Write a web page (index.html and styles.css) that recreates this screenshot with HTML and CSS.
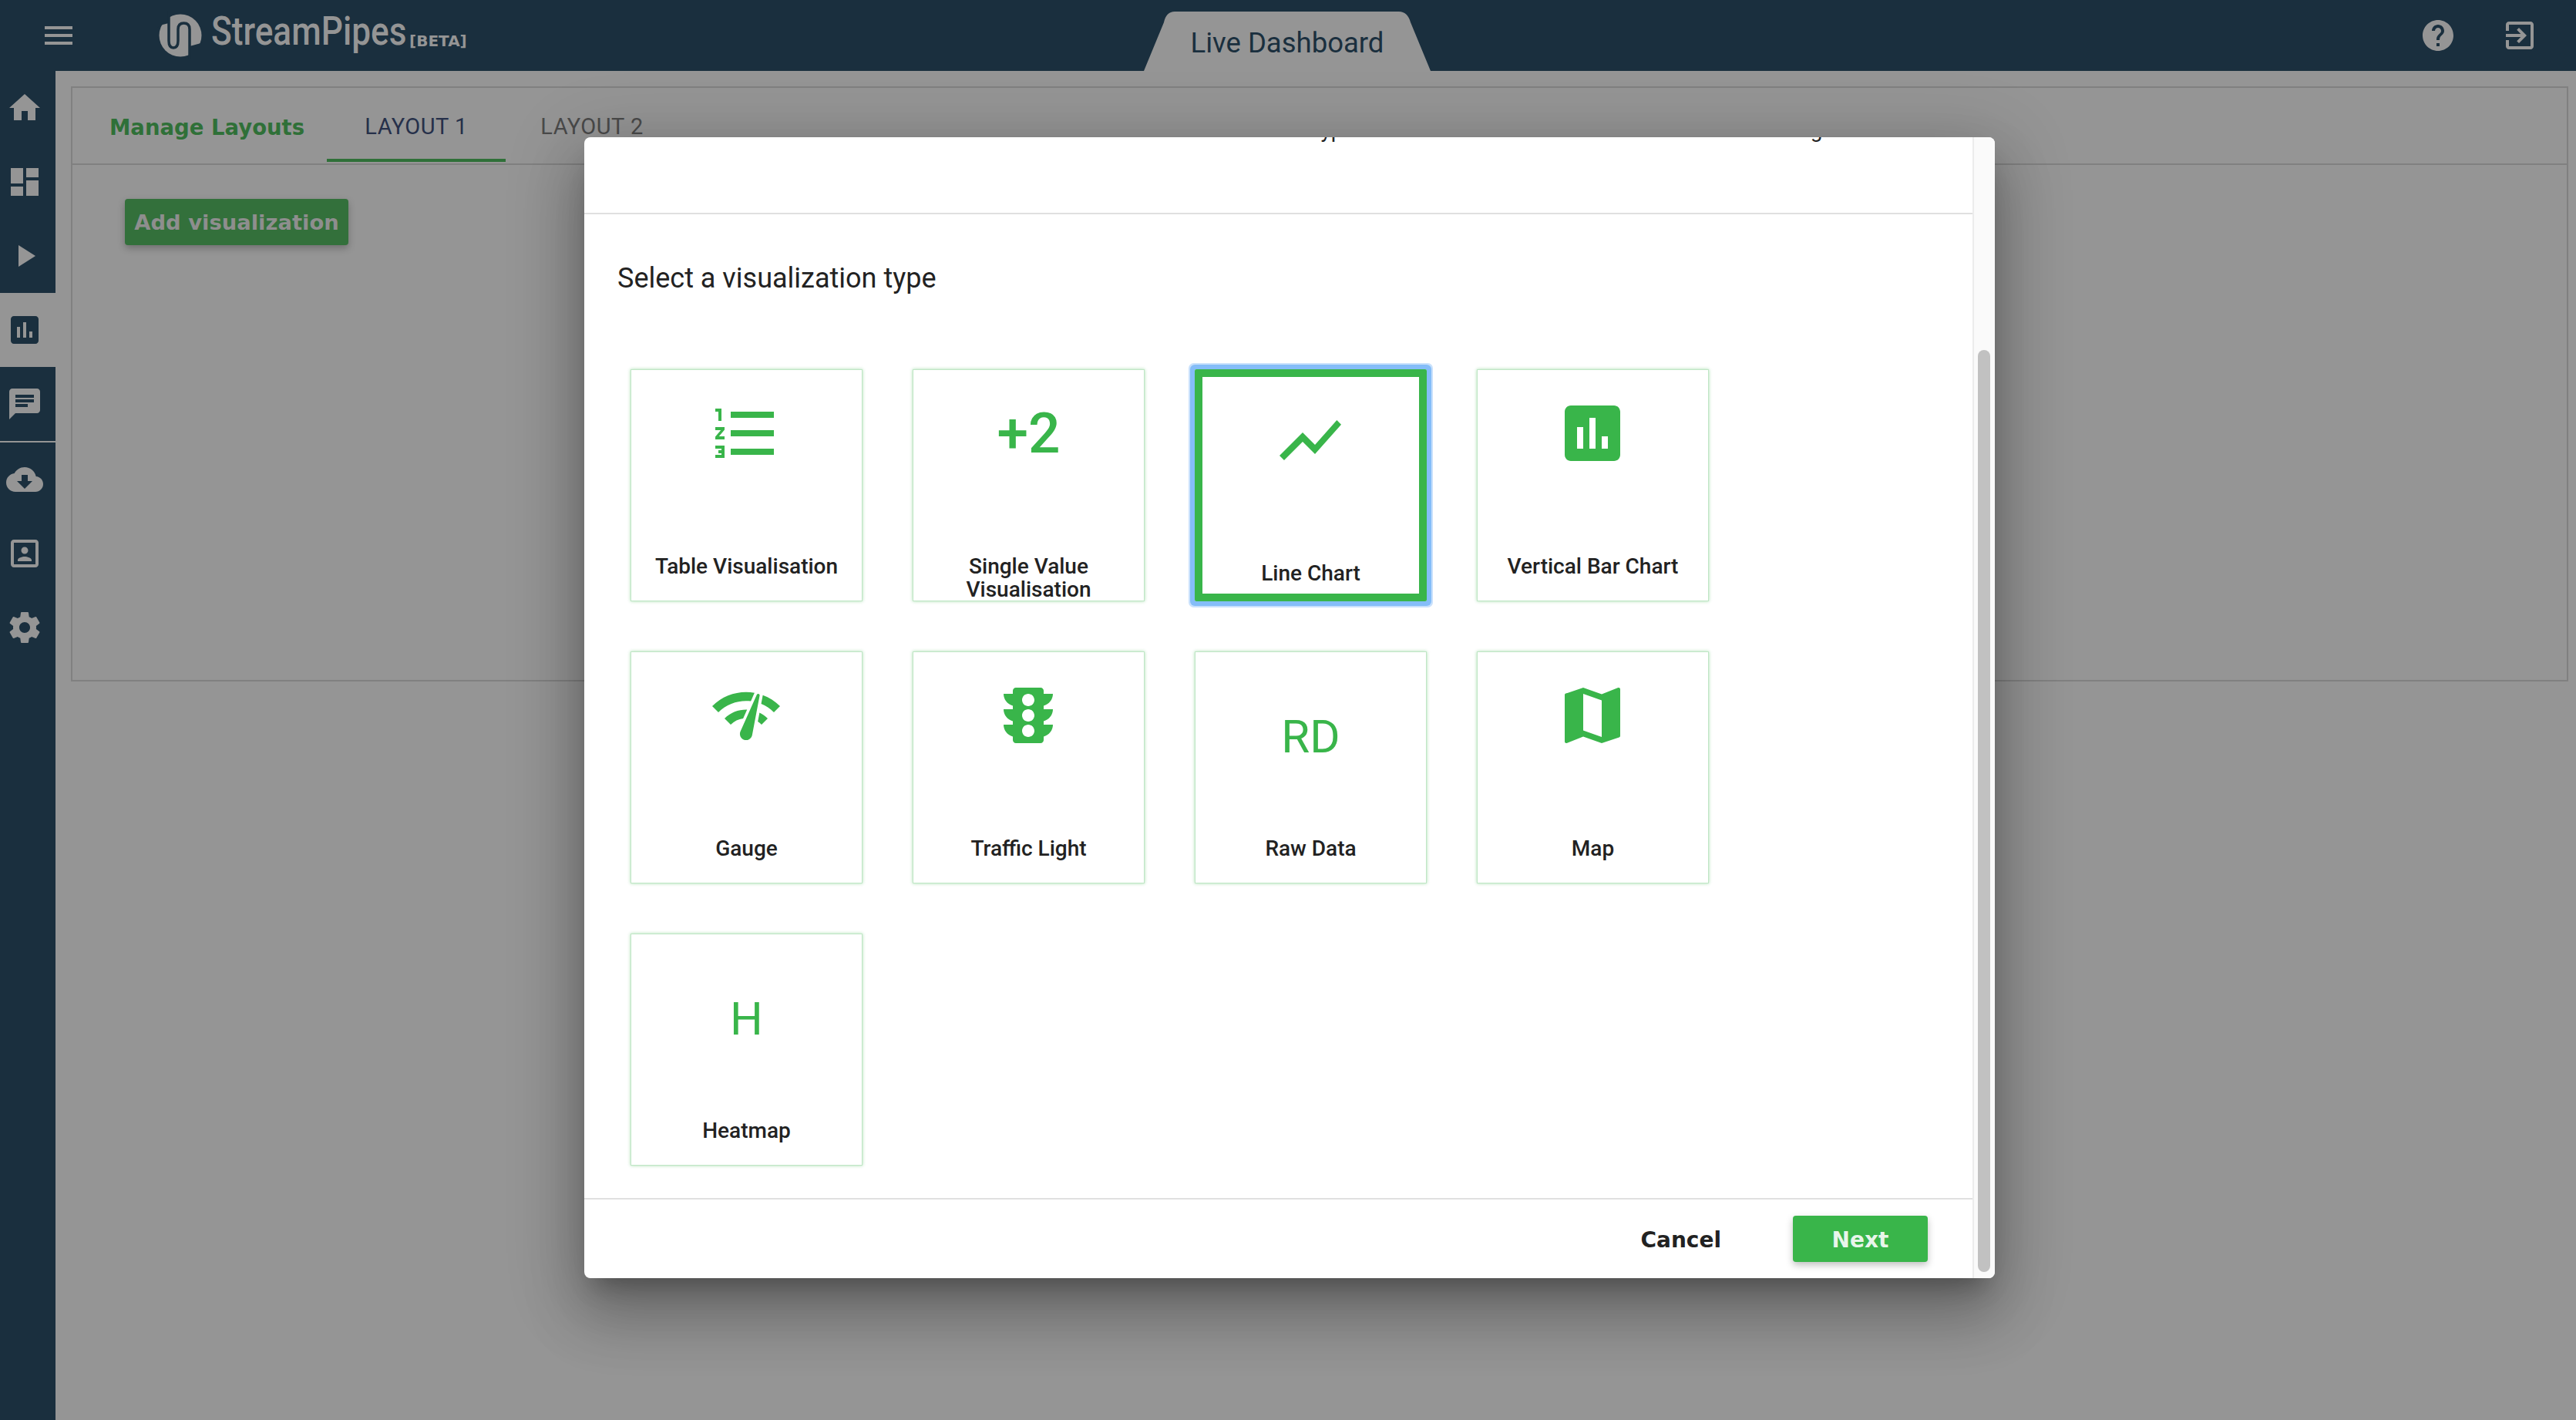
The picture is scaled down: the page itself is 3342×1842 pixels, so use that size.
FILE: index.html
```html
<!DOCTYPE html>
<html lang="en">
  <head>
    <meta charset="UTF-8" />
    <meta name="viewport" content="width=device-width, initial-scale=1.0" />
    <title>StreamPipes - Live Dashboard</title>
    <link rel="stylesheet" href="styles.css">
  </head>
  <body>
    <header class="topbar">
      <svg class="icon menu-icon" viewBox="0 0 24 24"><path d="M3 18h18v-2H3v2zm0-5h18v-2H3v2zm0-7v2h18V6H3z"/></svg>
      <div class="logo">
        <svg class="logo-mark" viewBox="0 0 76 72">
          <circle cx="38" cy="36" r="27.5" fill="#959595"/>
          <path class="logo-cut" d="M8 4H23V20L15 22L8 26zM50 50L61 47L70 44V70H50z"/>
          <path class="logo-line" d="M23 4V43Q23 52 29 52Q35 52 35 43V28Q35 20 42.5 20Q50 20 50 28V66"/>
        </svg>
        <span class="logo-name">StreamPipes</span>
        <span class="logo-beta">[BETA]</span>
      </div>
      <div class="page-tab">Live Dashboard</div>
      <div class="topbar-actions">
        <svg class="icon" viewBox="0 0 24 24"><path d="M12 2C6.48 2 2 6.48 2 12s4.48 10 10 10 10-4.48 10-10S17.52 2 12 2zm1 17h-2v-2h2v2zm2.07-7.75l-.9.92C13.45 12.9 13 13.5 13 15h-2v-.5c0-1.1.45-2.1 1.17-2.83l1.24-1.26c.37-.36.59-.86.59-1.41 0-1.1-.9-2-2-2s-2 .9-2 2H8c0-2.21 1.79-4 4-4s4 1.79 4 4c0 .88-.36 1.68-.93 2.25z"/></svg>
        <svg class="icon" viewBox="0 0 24 24"><path d="M10.09 15.59L11.5 17l5-5-5-5-1.41 1.41L12.67 11H3v2h9.67l-2.58 2.59zM19 3H5c-1.11 0-2 .9-2 2v4h2V5h14v14H5v-4H3v4c0 1.1.89 2 2 2h14c1.1 0 2-.9 2-2V5c0-1.1-.9-2-2-2z"/></svg>
      </div>
    </header>

    <div class="layout">
      <nav class="sidebar">
        <div class="nav-item"><svg class="icon" viewBox="0 0 24 24"><path d="M10 20v-6h4v6h5v-8h3L12 3 2 12h3v8z"/></svg></div>
        <div class="nav-item"><svg class="icon" viewBox="0 0 24 24"><path d="M3 13h8V3H3v10zm0 8h8v-6H3v6zm10 0h8V11h-8v10zm0-18v6h8V3h-8z"/></svg></div>
        <div class="nav-item"><svg class="icon" viewBox="0 0 24 24"><path d="M8 5v14l11-7z"/></svg></div>
        <div class="nav-item active"><svg class="icon" viewBox="0 0 24 24"><path d="M19 3H5c-1.1 0-2 .9-2 2v14c0 1.1.9 2 2 2h14c1.1 0 2-.9 2-2V5c0-1.1-.9-2-2-2zM9 17H7v-7h2v7zm4 0h-2V7h2v10zm4 0h-2v-4h2v4z"/></svg></div>
        <div class="nav-item"><svg class="icon" viewBox="0 0 24 24"><path d="M20 2H4c-1.1 0-1.99.9-1.99 2L2 22l4-4h14c1.1 0 2-.9 2-2V4c0-1.1-.9-2-2-2zM6 9h12v2H6V9zm8 5H6v-2h8v2zm4-6H6V6h12v2z"/></svg></div>
        <div class="nav-divider"></div>
        <div class="nav-item"><svg class="icon" viewBox="0 0 24 24"><path d="M19.35 10.04C18.67 6.59 15.64 4 12 4 9.11 4 6.6 5.64 5.35 8.04 2.34 8.36 0 10.91 0 14c0 3.31 2.69 6 6 6h13c2.76 0 5-2.24 5-5 0-2.64-2.05-4.78-4.65-4.96zM17 13l-5 5-5-5h3V9h4v4h3z"/></svg></div>
        <div class="nav-item"><svg class="icon" viewBox="0 0 24 24"><path d="M12 12.25c1.24 0 2.25-1.01 2.25-2.25S13.24 7.75 12 7.75 9.75 8.76 9.75 10s1.01 2.25 2.25 2.25zm4.5 4c0-1.5-3-2.25-4.5-2.25s-4.5.75-4.5 2.25V17h9v-.75zM19 3H5c-1.1 0-2 .9-2 2v14c0 1.1.9 2 2 2h14c1.1 0 2-.9 2-2V5c0-1.1-.9-2-2-2zm0 16H5V5h14v14z"/></svg></div>
        <div class="nav-item"><svg class="icon" viewBox="0 0 24 24"><path d="M19.43 12.98c.04-.32.07-.64.07-.98s-.03-.66-.07-.98l2.11-1.65c.19-.15.24-.42.12-.64l-2-3.46c-.12-.22-.39-.3-.61-.22l-2.49 1c-.52-.4-1.08-.73-1.69-.98l-.38-2.65C14.46 2.18 14.25 2 14 2h-4c-.25 0-.46.18-.49.42l-.38 2.65c-.61.25-1.17.59-1.69.98l-2.49-1c-.23-.09-.49 0-.61.22l-2 3.46c-.13.22-.07.49.12.64l2.11 1.65c-.04.32-.07.65-.07.98s.03.66.07.98l-2.11 1.65c-.19.15-.24.42-.12.64l2 3.46c.12.22.39.3.61.22l2.49-1c.52.4 1.08.73 1.69.98l.38 2.65c.03.24.24.42.49.42h4c.25 0 .46-.18.49-.42l.38-2.65c.61-.25 1.17-.59 1.69-.98l2.49 1c.23.09.49 0 .61-.22l2-3.46c.12-.22.07-.49-.12-.64l-2.11-1.65zM12 15.5c-1.93 0-3.5-1.57-3.5-3.5s1.57-3.5 3.5-3.5 3.5 1.57 3.5 3.5-1.57 3.5-3.5 3.5z"/></svg></div>
      </nav>

      <main class="content">
        <section class="panel">
          <div class="panel-tabs">
            <div class="manage-layouts">Manage Layouts</div>
            <div class="layout-tab current">LAYOUT 1</div>
            <div class="layout-tab">LAYOUT 2</div>
          </div>
          <div class="panel-body">
            <button class="add-btn" type="button">Add visualization</button>
          </div>
        </section>
      </main>
    </div>

    <!-- dialog sits on top of the dashboard -->
    <div class="dialog">
      <div class="dialog-main">
        <div class="dialog-head">
          <div class="stepper">
            <span class="step-one">Select visualization type</span>
            <span class="step-two">Configure</span>
          </div>
        </div>
        <div class="dialog-body">
          <h2 class="dialog-title">Select a visualization type</h2>
          <div class="viz-grid">
            <div class="viz-card">
              <svg class="viz-icon" viewBox="0 0 24 24"><path d="M2 17h2v.5H3v1h1v.5H2v1h3v-4H2v1zm1-9h1V4H2v1h1v3zm-1 3h1.8L2 13.1v.9h3v-1H3.2L5 10.9V10H2v1zm5-6v2h14V5H7zm0 14h14v-2H7v2zm0-6h14v-2H7v2z"/></svg>
              <div class="viz-label">Table Visualisation</div>
            </div>
            <div class="viz-card">
              <div class="viz-text">+2</div>
              <div class="viz-label">Single Value Visualisation</div>
            </div>
            <div class="viz-card selected">
              <svg class="viz-icon" viewBox="0 0 24 24"><path d="M3.5 18.49l6-6.01 4 4L22 6.92l-1.41-1.41-7.09 7.97-4-4L2 16.99z"/></svg>
              <div class="viz-label">Line Chart</div>
            </div>
            <div class="viz-card">
              <svg class="viz-icon" viewBox="0 0 24 24"><path d="M19 3H5c-1.1 0-2 .9-2 2v14c0 1.1.9 2 2 2h14c1.1 0 2-.9 2-2V5c0-1.1-.9-2-2-2zM9 17H7v-7h2v7zm4 0h-2V7h2v10zm4 0h-2v-4h2v4z"/></svg>
              <div class="viz-label">Vertical Bar Chart</div>
            </div>
            <div class="viz-card">
              <svg class="viz-icon" viewBox="0 0 24 24"><path d="M15.9 5c-.17 0-.32.09-.41.23l-.07.15-5.18 11.65c-.16.29-.26.61-.26.96 0 1.11.9 2.01 2.01 2.01.96 0 1.77-.68 1.96-1.59l.01-.03L16.4 5.5c0-.28-.22-.5-.5-.5zM1 9l2 2c2.88-2.88 6.79-4.08 10.53-3.62l1.19-2.68C9.89 3.84 4.74 5.27 1 9zm20 2l2-2c-1.64-1.64-3.55-2.82-5.59-3.57l-.53 2.82c1.5.62 2.9 1.53 4.12 2.75zm-4 4l2-2c-.8-.8-1.7-1.42-2.66-1.89l-.55 2.92c.42.27.83.59 1.21.97zM5 13l2 2c1.13-1.13 2.56-1.79 4.03-2l1.28-2.88c-2.63-.08-5.3.87-7.31 2.88z"/></svg>
              <div class="viz-label">Gauge</div>
            </div>
            <div class="viz-card">
              <svg class="viz-icon" viewBox="0 0 24 24"><path d="M20 10h-3V8.86c1.72-.45 3-2 3-3.86h-3V4c0-.55-.45-1-1-1H8c-.55 0-1 .45-1 1v1H4c0 1.86 1.28 3.41 3 3.86V10H4c0 1.86 1.28 3.41 3 3.86V15H4c0 1.86 1.28 3.41 3 3.86V20c0 .55.45 1 1 1h8c.55 0 1-.45 1-1v-1.14c1.72-.45 3-2 3-3.86h-3v-1.14c1.72-.45 3-2 3-3.86zm-8 9c-1.11 0-2-.9-2-2s.89-2 2-2c1.1 0 2 .9 2 2s-.89 2-2 2zm0-5c-1.11 0-2-.9-2-2s.89-2 2-2c1.1 0 2 .9 2 2s-.89 2-2 2zm0-5c-1.11 0-2-.9-2-2 0-1.11.89-2 2-2 1.1 0 2 .89 2 2 0 1.1-.89 2-2 2z"/></svg>
              <div class="viz-label">Traffic Light</div>
            </div>
            <div class="viz-card">
              <div class="viz-text small">RD</div>
              <div class="viz-label">Raw Data</div>
            </div>
            <div class="viz-card">
              <svg class="viz-icon" viewBox="0 0 24 24"><path d="M20.5 3l-.16.03L15 5.1 9 3 3.36 4.9c-.21.07-.36.25-.36.48V20.5c0 .28.22.5.5.5l.16-.03L9 18.9l6 2.1 5.64-1.9c.21-.07.36-.25.36-.48V3.5c0-.28-.22-.5-.5-.5zM15 19l-6-2.11V5l6 2.11V19z"/></svg>
              <div class="viz-label">Map</div>
            </div>
            <div class="viz-card">
              <div class="viz-text small">H</div>
              <div class="viz-label">Heatmap</div>
            </div>
          </div>
        </div>
        <div class="dialog-foot">
          <button class="cancel-btn" type="button">Cancel</button>
          <button class="next-btn" type="button">Next</button>
        </div>
      </div>
      <div class="scroll-track"><div class="scroll-thumb"></div></div>
    </div>
  </body>
</html>
```

FILE: styles.css
```css
body {
  font-family: Roboto, sans-serif;
  margin: 0;
  background-color: #959595;
  min-height: 100vh;
  overflow: hidden;
}

.icon {
  display: block;
  width: 48px;
  height: 48px;
  fill: #959595;
  flex-shrink: 0;
}

/* top bar */
.topbar {
  display: flex;
  align-items: center;
  height: 92px;
  padding-left: 52px;
  background-color: #1a2f3e;
}

.logo {
  display: flex;
  align-items: baseline;
  margin-left: 96px;
  width: 460px;
  color: #959595;
}

.logo-mark {
  width: 76px;
  height: 72px;
  align-self: center;
}

.logo-cut {
  fill: #1a2f3e;
}

.logo-line {
  fill: none;
  stroke: #1a2f3e;
  stroke-width: 3.5;
}

.logo-name {
  display: inline-block;
  width: 257px;
  margin-left: 2px;
  font-size: 52px;
  font-weight: 500;
  white-space: nowrap;
  transform: scaleX(0.85);
  transform-origin: left;
}

.logo-beta {
  position: relative;
  top: 2px;
  font-family: "DejaVu Sans", sans-serif;
  font-size: 20px;
  font-weight: bold;
}

.page-tab {
  align-self: flex-end;
  width: 372px;
  height: 77px;
  margin-left: 828px;
  padding-top: 20px;
  box-sizing: border-box;
  background-color: #959595;
  color: #1a2f3e;
  font-size: 36.5px;
  line-height: 42px;
  text-align: center;
  clip-path: path("M0 77L26 14Q29 0 40 0L331 0Q342 0 346 14L372 77Z");
}

.topbar-actions {
  display: flex;
  gap: 58px;
  margin-left: auto;
  margin-right: 49px;
}

/* sidebar and page */
.layout {
  display: flex;
  min-height: calc(100vh - 92px);
}

.sidebar {
  width: 72px;
  flex-shrink: 0;
  background-color: #1a2f3e;
}

.nav-item {
  display: flex;
  align-items: center;
  height: 96px;
  padding-left: 8px;
}

.nav-item.active {
  background-color: #959595;
}

.nav-item.active .icon {
  fill: #1a2f3e;
}

.nav-divider {
  height: 2px;
  background-color: #959595;
}

.content {
  flex: 1;
  padding: 20px 10px 0 20px;
}

.panel {
  height: 772px;
  box-sizing: border-box;
  border: 2px solid #808080;
}

.panel-tabs {
  display: flex;
  height: 98px;
  border-bottom: 2px solid #808080;
}

.manage-layouts {
  width: 330px;
  box-sizing: border-box;
  padding: 34px 0 0 48px;
  color: #2f7038;
  font-family: "DejaVu Sans", sans-serif;
  font-size: 27.5px;
  font-weight: bold;
  line-height: 34px;
}

.layout-tab {
  width: 224px;
  height: 92px;
  box-sizing: border-box;
  padding-top: 33px;
  color: #4a4a4a;
  font-size: 29px;
  letter-spacing: 0.5px;
  line-height: 34px;
  text-align: center;
}

.layout-tab.current {
  width: 232px;
  height: 96px;
  border-bottom: 4px solid #2f7038;
  color: #26304a;
}

.panel-body {
  padding: 44px 0 0 68px;
}

.add-btn {
  width: 290px;
  height: 60px;
  padding: 0;
  border: none;
  border-radius: 4px;
  background-color: #33703b;
  color: #8e8e8e;
  font-family: "DejaVu Sans", sans-serif;
  font-size: 27.4px;
  font-weight: bold;
  box-shadow: 0 4px 10px rgba(0, 0, 0, 0.25);
}

/* dialog */
.dialog {
  position: absolute;
  top: 178px;
  left: 758px;
  display: flex;
  width: 1830px;
  height: 1480px;
  border-radius: 8px;
  overflow: hidden;
  background-color: #ffffff;
  box-shadow: 0 22px 30px -14px rgba(0, 0, 0, 0.28),
    0 48px 76px 6px rgba(0, 0, 0, 0.2), 0 18px 92px 16px rgba(0, 0, 0, 0.16);
}

.dialog-main {
  flex: 1;
  display: flex;
  flex-direction: column;
}

.dialog-head {
  height: 98px;
  flex-shrink: 0;
  overflow: hidden;
  border-bottom: 2px solid #e0e0e0;
}

.stepper {
  display: flex;
  margin-top: -25px;
  color: #222222;
  font-size: 28px;
  line-height: 32px;
  white-space: nowrap;
}

.step-one {
  margin-left: 700px;
}

.step-two {
  margin-left: 526px;
}

.dialog-body {
  flex: 1;
  padding: 61px 0 0 43px;
}

.dialog-title {
  margin: 0;
  color: #222222;
  font-size: 36px;
  font-weight: 400;
  line-height: 44px;
}

.viz-grid {
  display: grid;
  grid-template-columns: repeat(4, 301px);
  grid-auto-rows: 301px;
  gap: 65px;
  margin: 96px 0 0 17px;
}

.viz-card {
  display: flex;
  flex-direction: column;
  align-items: center;
  box-sizing: border-box;
  border: 1px solid #bfe6c5;
  box-shadow: 0 0 4px rgba(57, 181, 74, 0.45);
}

.viz-card.selected {
  border: 10px solid #39b54a;
  border-radius: 2px;
  box-shadow: 0 0 0 6px #85bdf8, 0 0 0 8px #c9e1fc;
}

.viz-icon {
  display: block;
  width: 96px;
  height: 96px;
  margin: 34px 2px 0 0;
  flex-shrink: 0;
  fill: #39b54a;
}

.viz-text {
  height: 96px;
  margin-top: 34px;
  flex-shrink: 0;
  color: #39b54a;
  font-size: 73px;
  font-weight: 500;
  line-height: 96px;
}

.viz-text.small {
  font-size: 60px;
  font-weight: 400;
  line-height: 151px;
}

.viz-label {
  width: 240px;
  margin-top: 110px;
  color: #222222;
  font-size: 28px;
  font-weight: 500;
  line-height: 30px;
  text-align: center;
}

.dialog-foot {
  display: flex;
  align-items: center;
  justify-content: flex-end;
  height: 102px;
  flex-shrink: 0;
  padding-right: 58px;
  border-top: 2px solid #e0e0e0;
}

.cancel-btn {
  margin-right: 93px;
  padding: 3px 0 0;
  border: none;
  background: none;
  color: #222222;
  font-family: "DejaVu Sans", sans-serif;
  font-size: 28px;
  font-weight: bold;
}

.next-btn {
  width: 175px;
  height: 60px;
  padding: 3px 0 0;
  border: none;
  border-radius: 4px;
  background-color: #39b54a;
  color: #e8f5ea;
  font-family: "DejaVu Sans", sans-serif;
  font-size: 28px;
  font-weight: bold;
  box-shadow: 0 4px 10px rgba(0, 0, 0, 0.25);
}

.scroll-track {
  width: 29px;
  box-sizing: border-box;
  border-left: 2px solid #ececec;
  background-color: #fafafa;
}

.scroll-thumb {
  width: 16px;
  height: 1196px;
  margin: 276px 0 0 5px;
  border-radius: 8px;
  background-color: #c1c1c1;
}
```
